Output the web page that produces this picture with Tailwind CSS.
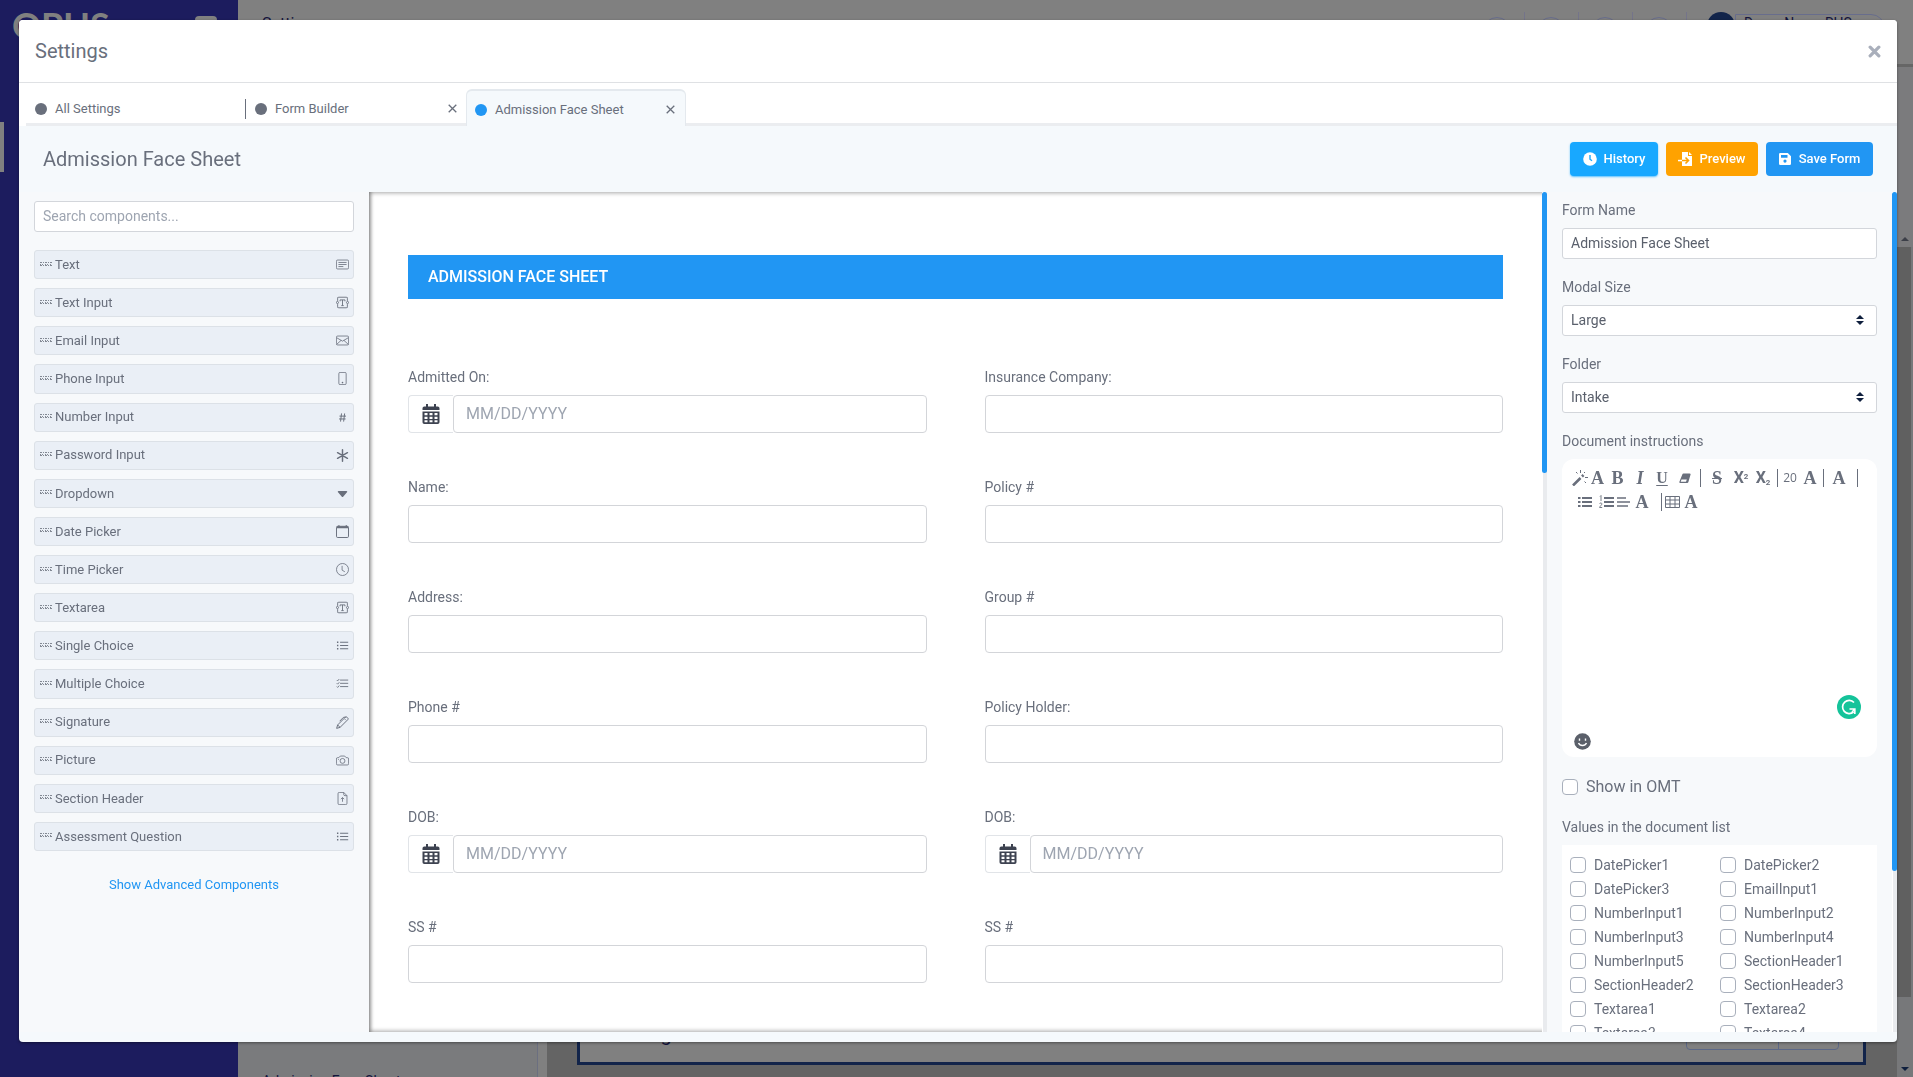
<!DOCTYPE html>
<html lang="en">
<head>
<meta charset="utf-8">
<title>Settings - Admission Face Sheet</title>
<script src="https://cdn.jsdelivr.net/npm/@tailwindcss/browser@4"></script>
</head>
<body class="h-screen overflow-hidden bg-[#808080] font-['Roboto',sans-serif] text-[#696f7c]">

<svg class="hidden" aria-hidden="true">
  <symbol id="grip" viewBox="0 0 12 5"><path fill="currentColor" d="M0 0h2v1H0zM3 0h1v1H3zM5 0h2v1H5zM8 0h1v1H8zM10 0h2v1h-2zM0 2h1v1H0zM2 2h1v1H2zM5 2h1v1H5zM7 2h1v1H7zM10 2h1v1h-1zM0 3h2v1H0zM3 3h1v1H3zM5 3h2v1H5zM8 3h1v1H8zM10 3h2v1h-2z" opacity=".8"/></symbol>
  <symbol id="text" viewBox="0 0 16 16"><g fill="none" stroke="currentColor"><rect x=".5" y="2.5" width="15" height="11" rx="1.5"/><path d="M3 5.5h10M3 8h10M3 10.5h6"/></g></symbol>
  <symbol id="textinput" viewBox="0 0 16 16"><g fill="none" stroke="currentColor" stroke-width="1.1"><path d="M2 6V3.500A1.500 1.500 0 0 1 3.500 1.500h9A1.500 1.500 0 0 1 14 3.500V6M2 10v2.500A1.500 1.500 0 0 0 3.500 14.500h9a1.500 1.500 0 0 0 1.500-2V10"/><circle cx="1.800" cy="8" r="1.300"/><circle cx="14.200" cy="8" r="1.300"/><path d="M5 6.500V4.800h6v1.700M8 4.800v7M6.500 11.800h3"/></g></symbol>
  <symbol id="mail" viewBox="0 0 16 16"><g fill="none" stroke="currentColor"><rect x=".5" y="2.500" width="15" height="11" rx="1.500"/><path d="M.7 4.500 8 8.800l7.300-4.300M.8 12.800l5.500-5M15.200 12.800l-5.500-5"/></g></symbol>
  <symbol id="phone" viewBox="0 0 16 16"><rect x="3.500" y=".5" width="9" height="15" rx="1.500" fill="none" stroke="currentColor"/><circle cx="8" cy="13" r="1" fill="currentColor"/></symbol>
  <symbol id="hash" viewBox="0 0 16 16"><path d="M6.800 3 5.600 13M10.600 3 9.400 13M4.300 6.300h8M3.800 9.800h8" fill="none" stroke="currentColor" stroke-width="1.200"/></symbol>
  <symbol id="asterisk" viewBox="0 0 16 16"><path d="M8 1v14M1.900 4.500l12.200 7M1.900 11.500l12.200-7" fill="none" stroke="currentColor" stroke-width="1.800" stroke-linecap="round"/></symbol>
  <symbol id="caret" viewBox="0 0 16 16"><path d="M3.200 5h9.600a.9.9 0 0 1 .7 1.600l-4.700 5.300a1 1 0 0 1-1.600 0L2.500 6.600A.9.900 0 0 1 3.200 5z" fill="currentColor"/></symbol>
  <symbol id="calendar" viewBox="0 0 16 16"><rect x=".6" y="1.600" width="14.800" height="13.800" rx="1.500" fill="none" stroke="currentColor" stroke-width="1.200"/><path d="M1 1.500h14v2.500H1zM3 0h1.200v2H3zM12 0h1.200v2H12z" fill="currentColor"/></symbol>
  <symbol id="clock" viewBox="0 0 16 16"><g fill="none" stroke="currentColor"><circle cx="8" cy="8" r="7.400"/><path d="M7.500 3.500v5.300l3.400 2"/></g></symbol>
  <symbol id="list" viewBox="0 0 16 16"><path d="M5 4h10M5 8h10M5 12h10" fill="none" stroke="currentColor" stroke-width="1.200"/><path d="M1.200 3.200h1.700v1.700H1.200zM1.200 7.200h1.700v1.700H1.200zM1.200 11.200h1.700v1.700H1.200z" fill="currentColor"/></symbol>
  <symbol id="checks" viewBox="0 0 16 16"><path d="M5 3.800h10M5 7.800h10M5 11.800h10M1 3.800l1 1 2-2.300M1 7.800l1 1 2-2.300M1 11.800l1 1 2-2.300" fill="none" stroke="currentColor" stroke-width="1.100"/></symbol>
  <symbol id="pen" viewBox="0 0 16 16"><path d="M.8 15.200 2 11 11.500 1.500a1.400 1.400 0 0 1 2 0l1 1a1.400 1.400 0 0 1 0 2L5 14zM2 11l3 3M12 1.200 9 1.800 4.500 6.400M11 4l1 1" fill="none" stroke="currentColor" stroke-width="1.200" stroke-linejoin="round"/></symbol>
  <symbol id="camera" viewBox="0 0 16 16"><g fill="none" stroke="currentColor"><path d="M.5 6A1.500 1.500 0 0 1 2 4.500h1.500L5.300 2.500h5.400l1.800 2H14A1.500 1.500 0 0 1 15.500 6v6a1.500 1.500 0 0 1-1.500 1.500H2A1.500 1.500 0 0 1 .5 12z"/><circle cx="8" cy="8.500" r="3"/></g><path d="M2.500 6h1v1h-1z" fill="currentColor"/></symbol>
  <symbol id="filearrow" viewBox="0 0 16 16"><path d="M9.500.5H4A1.500 1.500 0 0 0 2.500 2v12A1.500 1.500 0 0 0 4 15.500h8a1.500 1.500 0 0 0 1.500-1.500V4.500zM9.500.5v2.500A1.500 1.500 0 0 0 11 4.500h2.500M8 12V7M6 8.800l2-2 2 2" fill="none" stroke="currentColor"/></symbol>
  <symbol id="close" viewBox="0 0 9 9"><path d="M.7.7l7.600 7.600M8.300.7L.7 8.300" fill="none" stroke="currentColor" stroke-width="1.300"/></symbol>
  <symbol id="updown" viewBox="0 0 8 10"><path d="M4 0l4 4H0zM4 10L0 6h8z" fill="#0f1f3d"/></symbol>
  <symbol id="caldays" viewBox="0 0 17 20"><path fill="currentColor" fill-rule="evenodd" d="M3.500 0h2v2.500h6V0h2v2.500h1.700A1.800 1.800 0 0 1 17 4.300V6H0V4.300A1.800 1.800 0 0 1 1.800 2.500h1.700zM0 7.500h17v10.700a1.800 1.800 0 0 1-1.800 1.800H1.800A1.800 1.800 0 0 1 0 18.200zM2 9v2.300h3V9zm5 0v2.300h3V9zm5 0v2.300h3V9zM2 12.700V15h3v-2.300zm5 0V15h3v-2.300zm5 0V15h3v-2.300zM2 16.300v2h3v-2zm5 0v2h3v-2zm5 0v2h3v-2z"/></symbol>
</svg>

<!-- Page behind the dialog -->
<div class="flex h-full overflow-hidden" aria-hidden="true">
  <aside class="relative flex h-full w-[238px] shrink-0 items-start justify-between bg-[#1c1c5e] pt-[9px] pr-[21px] pl-3 text-[#808080]">
    <span class="font-['Lato',sans-serif] text-[36px] leading-8 font-bold">OPUS</span>
    <span class="mt-[7px] h-4 w-[22px] rounded-sm bg-[#808080]"></span>
    <span class="absolute top-[122px] left-0 h-[50px] w-1 bg-[#808080]"></span>
  </aside>
  <div class="flex min-w-0 flex-1 flex-col">
    <div class="flex h-16 shrink-0 items-start justify-between bg-[#808080] pr-7 pl-6 text-[#14143c]">
      <span class="pt-3 text-base">Settings</span>
      <div class="flex items-start">
        <div class="mt-3 h-8 w-[54px] border-r border-[#74748a] px-3 pt-[5px]"><div class="size-7 rounded-full border border-[#686d8c]"></div></div>
        <div class="mt-3 h-8 w-[54px] border-r border-[#74748a] px-3 pt-[5px]"><div class="size-7 rounded-full border border-[#686d8c]"></div></div>
        <div class="mt-3 h-8 w-[54px] border-r border-[#74748a] px-3 pt-[5px]"><div class="size-7 rounded-full border border-[#686d8c]"></div></div>
        <div class="mt-3 mr-5 h-8 w-[54px] border-r border-[#74748a] px-3 pt-[5px]"><div class="size-7 rounded-full border border-[#686d8c]"></div></div>
        <div class="mt-3 size-7 rounded-full bg-[#12244a]"></div>
        <div class="mt-[14px] h-7 w-[150px] rounded-r-full border border-[#686d8c] pl-2 text-sm leading-4">Demo Nurse RHS</div>
      </div>
    </div>
    <div class="flex min-h-0 flex-1 border-t-3 border-[#666]">
      <div class="flex w-[300px] shrink-0 flex-col justify-end border-r border-[#6b6f80] bg-[#7a7b7d] pl-6 text-sm text-[#14143c]"><span class="-mb-3.5">Admission Face Sheet</span></div>
      <div class="w-[9px] bg-[#808080]"></div>
      <div class="flex min-w-0 flex-1 bg-[#646464] pr-[31px] pb-[12px] pl-[30px]">
        <div class="flex flex-1 items-end justify-between border-3 border-[#12244a] bg-[#808080] pr-6 pb-3 pl-[29px]">
          <span class="text-xl leading-8 text-[#14143c]">Settings</span>
          <div class="flex h-8 w-[153px] rounded border border-[#5c6887]"><span class="w-[92px] border-r border-[#5c6887]"></span></div>
        </div>
      </div>
      <div class="flex w-4 shrink-0 flex-col items-center bg-[#77787a]">
        <div class="flex h-[180px] w-full shrink-0 flex-col items-center justify-end bg-[#7b7b7d] pb-1.5"><svg class="h-1 w-2" viewBox="0 0 8 4"><path d="M0 4h8L4 0z" fill="#3c3f48"/></svg></div>
        <div class="w-full flex-1 border-r-2 border-[#77787a] bg-[#606060]"></div>
        <div class="flex h-20 items-end pb-1.5"><svg class="h-1 w-2" viewBox="0 0 8 4"><path d="M0 0h8L4 4z" fill="#0f1f3d"/></svg></div>
      </div>
    </div>
  </div>
</div>

<!-- Dialog -->
<div class="fixed inset-0 flex pt-5 pr-4 pb-[35px] pl-[19px]">
<div role="dialog" aria-label="Settings" class="flex min-w-0 flex-1 flex-col overflow-hidden rounded bg-[#f5f9fc] shadow-[0_1px_3px_rgba(0,0,0,0.4)]">

  <header class="flex h-[63px] shrink-0 items-center justify-between border-b border-[#dfe1e4] bg-white pr-4 pl-4">
    <h1 class="text-xl">Settings</h1>
    <button aria-label="Close" class="text-[#a9afbb]"><svg class="size-[13px]" viewBox="0 0 12 12"><path d="M2 2l8 8M10 2l-8 8" stroke="currentColor" stroke-width="3" stroke-linecap="round"/></svg></button>
  </header>

  <nav class="flex h-[43px] shrink-0 items-end bg-white pl-[7px] text-[13px]">
    <div class="flex h-9 w-[220px] items-center border-b-3 border-[#ebedf0] pt-1 pr-[10px] pl-[9px]">
      <a href="#" class="flex flex-1 items-center gap-2"><span class="size-3 rounded-full bg-[#696f7c]"></span>All Settings</a>
      <span class="-mr-[10px] h-5 w-px bg-[#696f7c]"></span>
    </div>
    <div class="flex h-9 w-[220px] items-center border-b-3 border-[#ebedf0] pt-1 pr-[9px] pl-[9px]">
      <a href="#" class="flex flex-1 items-center gap-2"><span class="size-3 rounded-full bg-[#696f7c]"></span>Form Builder</a>
      <button aria-label="Close Form Builder"><svg class="size-[9px]"><use href="#close"/></svg></button>
    </div>
    <div class="flex h-[37px] w-[220px] items-center rounded-t-md border-x border-t-2 border-[#e4e9ee] bg-[#f5f9fc] pt-0.5 pr-[10px] pl-2">
      <a href="#" class="flex flex-1 items-center gap-2"><span class="size-3 rounded-full bg-[#2196f3]"></span>Admission Face Sheet</a>
      <button aria-label="Close Admission Face Sheet"><svg class="size-[9px]"><use href="#close"/></svg></button>
    </div>
    <div class="h-9 flex-1 border-b-3 border-[#ebedf0]"></div>
  </nav>

  <div class="flex h-[66px] shrink-0 items-center justify-between pr-6 pl-6">
    <h2 class="text-xl">Admission Face Sheet</h2>
    <div class="flex gap-2 text-[13px] font-medium text-white">
      <button class="flex h-[34px] w-[88px] items-center justify-center gap-[7px] rounded bg-[#18a8ff] shadow-[0_1px_2px_rgba(24,168,255,0.7)]"><svg class="size-[14px]" viewBox="0 0 14 14"><circle cx="7" cy="7" r="6.800" fill="#fff"/><path d="M7 3v4.200l2 1.500" stroke="#18a8ff" stroke-width="1.400" fill="none"/></svg>History</button>
      <button class="flex h-[34px] w-[92px] items-center justify-center gap-[7px] rounded bg-[#ffa200]"><svg class="size-[14px]" viewBox="0 0 14 14"><path d="M4 0h6v4h4v9.500a.5.500 0 0 1-.5.500h-9a.5.500 0 0 1-.5-.5z" fill="#fff"/><path d="M11 0v3h3z" fill="#fff"/><path d="M4 8.500h6M7.500 5.500l3 3-3 3" stroke="#ffa200" stroke-width="1.600" fill="none"/><path d="M0 7.800h4v1.500H0z" fill="#fff"/></svg>Preview</button>
      <button class="flex h-[34px] w-[107px] items-center justify-center gap-2 rounded bg-[#2196f3]"><svg class="size-3" viewBox="0 0 12 12"><path fill="#fff" fill-rule="evenodd" d="M1.300 0h7.500L12 3.200v7.500a1.300 1.300 0 0 1-1.300 1.300H1.300A1.300 1.300 0 0 1 0 10.700V1.300A1.300 1.300 0 0 1 1.300 0zM2 2v2.800h6.500V2zm4 4.500A1.600 1.600 0 1 0 6 9.700a1.600 1.600 0 1 0 0-3.200z"/></svg>Save Form</button>
    </div>
  </div>

  <div class="mb-[10px] flex min-h-0 flex-1">
    <!-- Component palette -->
    <section class="flex w-[350px] shrink-0 flex-col bg-[#f7f9fb] pt-[9px] pr-[15px] pl-[15px]">
      <input type="search" aria-label="Search components" placeholder="Search components..." class="h-[31px] shrink-0 rounded-[3px] border border-[#d3d6db] bg-white px-2 pb-0.5 text-sm placeholder:text-[#9ea5b1]">
      <ul id="palette" class="mt-[18px] grid h-[601px] shrink-0 auto-rows-fr gap-[9px] text-[13px]"></ul>
      <a href="#" class="mt-6 self-center text-[13px] text-[#2196f3]">Show Advanced Components</a>
    </section>

    <!-- Form canvas -->
    <section class="min-w-0 flex-1 overflow-hidden bg-white px-[39px] pt-[63px] shadow-[inset_3px_3px_4px_-2px_rgba(0,0,0,0.35),inset_3px_-3px_4px_-2px_rgba(0,0,0,0.35)]">
      <h3 class="flex h-11 items-center bg-[#2196f3] px-5 text-base font-medium text-white">ADMISSION FACE SHEET</h3>
      <form id="fields" class="mt-[68px] grid grid-cols-2 gap-x-[58px]"></form>
    </section>
    <div class="w-[5px] shrink-0 border-l border-white bg-[#e9ebee]"><div class="-ml-px h-[281px] w-[5px] rounded-full bg-[#2196f3]"></div></div>

    <!-- Form properties -->
    <section class="flex w-[345px] shrink-0 flex-col overflow-hidden bg-[#f7f9fb] pt-2 pr-[15px] pl-[15px] text-sm">
      <label for="form-name" class="leading-5">Form Name</label>
      <input id="form-name" value="Admission Face Sheet" class="mt-2 h-[31px] shrink-0 rounded-[3px] border border-[#d3d6db] bg-white px-2 pb-0.5 text-[#5a606c]">
      <label for="modal-size" class="mt-[18px] leading-5">Modal Size</label>
      <div class="relative mt-2 flex h-[31px] shrink-0">
        <select id="modal-size" class="w-full appearance-none rounded-[3px] border border-[#d3d6db] bg-white px-2 pb-0.5 text-[#5a606c]"><option>Large</option></select>
        <svg class="pointer-events-none absolute top-[10px] right-[13px] h-[10px] w-2"><use href="#updown"/></svg>
      </div>
      <label for="folder" class="mt-[18px] leading-5">Folder</label>
      <div class="relative mt-2 flex h-[31px] shrink-0">
        <select id="folder" class="w-full appearance-none rounded-[3px] border border-[#d3d6db] bg-white px-2 pb-0.5 text-[#5a606c]"><option>Intake</option></select>
        <svg class="pointer-events-none absolute top-[10px] right-[13px] h-[10px] w-2"><use href="#updown"/></svg>
      </div>
      <span class="mt-[18px] leading-5">Document instructions</span>
      <div class="relative mt-2 flex h-[298px] shrink-0 flex-col rounded-xl bg-white pt-[7px] pl-[10px]">
        <div class="flex h-6 items-center font-['Liberation_Serif',serif] text-lg leading-6 font-bold">
          <button aria-label="Magic wand" class="w-[18px]"><svg class="size-4" viewBox="0 0 16 16"><path d="M1 15.500 8.500 8M10 6.500 11.500 5" stroke="currentColor" stroke-width="2.600" fill="none"/><path d="M8.500 0v3M4 2l1.500 1.500M13 2l-1 1M13 7.500h3M12.500 11.500l1.500 1.500" stroke="currentColor" fill="none"/></svg></button>
          <button class="w-[15px]">A</button>
          <button aria-label="Bold" class="w-[25px]">B</button>
          <button aria-label="Italic" class="w-5 italic">I</button>
          <button aria-label="Underline" class="w-6 text-base underline underline-offset-2">U</button>
          <button aria-label="Eraser" class="flex w-[22px] justify-center"><svg class="h-[11px] w-3" viewBox="0 0 12 11"><path d="M4.500.5h6a1 1 0 0 1 1 1.300L9.300 9.200a1.200 1.200 0 0 1-1.100.8H1.400a1 1 0 0 1-1-1.300L3.300 1.400A1.300 1.300 0 0 1 4.500.5z" fill="currentColor"/><path d="M2.500 6.500h5.300L7 8.800H1.700z" fill="#fff"/></svg></button>
          <span class="mx-1 h-[18px] w-px bg-[#696f7c]"></span>
          <button aria-label="Strikethrough" class="w-6 line-through">S</button>
          <button class="w-6 font-['Roboto',sans-serif] text-base">X<sup class="text-[8px]">2</sup></button>
          <button class="w-5 font-['Roboto',sans-serif] text-base">X<sub class="text-[8px]">2</sub></button>
          <span class="mx-1 h-[18px] w-px bg-[#696f7c]"></span>
          <button class="w-4 font-['Open_Sans',sans-serif] text-xs font-normal">20</button>
          <button class="w-6">A</button>
          <span class="mx-px h-[18px] w-px bg-[#696f7c]"></span>
          <button class="w-7">A</button>
          <span class="mx-1 h-[18px] w-px bg-[#696f7c]"></span>
        </div>
        <div class="flex h-6 items-center pl-[6px] font-['Liberation_Serif',serif] text-lg leading-6 font-bold">
          <button aria-label="Bulleted list" class="w-5"><svg class="h-3 w-[14px]" viewBox="0 0 14 12"><path d="M4 2h10M4 6h10M4 10h10M0 2h2.500M0 6h2.500M0 10h2.500" stroke="currentColor" stroke-width="2"/></svg></button>
          <button aria-label="Numbered list" class="ml-px w-[18px]"><svg class="h-[14px] w-[15px]" viewBox="0 0 15 14"><path d="M5 3h10M5 7h10M5 11h10" stroke="currentColor" stroke-width="2"/><path d="M1 1.500l1-1V6M.6 9c.3-1.500 2.600-1.300 2.200.2-.2 1-1.800 1.800-2.200 3.300H3.200" stroke="currentColor" stroke-width=".9" fill="none"/></svg></button>
          <button aria-label="Align left" class="w-4"><svg class="h-3 w-[13px]" viewBox="0 0 13 12"><path d="M0 2h9M0 6h13M0 10h11" stroke="currentColor" stroke-width="1.500"/></svg></button>
          <button class="w-[18px]">A</button>
          <span class="ml-[10px] h-[18px] w-px bg-[#696f7c]"></span>
          <button aria-label="Table" class="ml-[3px] w-[18px]"><svg class="h-3 w-[15px]" viewBox="0 0 15 12"><path d="M.5.5h14v11H.5zM.5 4h14M.5 8h14M5 .5v11M10 .5v11" stroke="currentColor" fill="none"/></svg></button>
          <button class="w-4">A</button>
        </div>
        <div contenteditable="true" role="textbox" aria-label="Document instructions" class="flex-1 outline-none"></div>
        <svg class="mb-[7px] ml-0.5 size-[17px]" viewBox="0 0 17 17"><circle cx="8.500" cy="8.500" r="8.300" fill="#5b606a"/><path d="M4.500 10c1.500 3.300 6.500 3.300 8 0M5.500 5.500v2.200M11.500 5.500v2.200" stroke="#fff" stroke-width="1.400" fill="none"/></svg>
        <svg class="absolute right-4 bottom-[38px] size-6" viewBox="0 0 24 24"><circle cx="12" cy="12" r="12" fill="#15c39a"/><path d="M17 7.500A6.600 6.600 0 1 0 16.500 17M12.500 14h5.300v5M18 14l-3 3" stroke="#fff" stroke-width="1.700" fill="none"/></svg>
      </div>
      <label class="mt-[18px] flex items-center gap-2 text-base"><input type="checkbox" class="size-4 appearance-none rounded-[4px] border border-[#a9b0bc] bg-white">Show in OMT</label>
      <span class="mt-[18px] leading-5">Values in the document list</span>
      <div id="values" class="mt-2 grid shrink-0 auto-rows-[24px] grid-cols-[150px_1fr] bg-white pt-2 pl-2"></div>
    </section>
    <div class="w-[5px] shrink-0 border-l border-white bg-[#e9ebee]"><div class="-ml-px h-[679px] w-[5px] rounded-full bg-[#2196f3]"></div></div>
  </div>
</div>
</div>

<script>
const components = [['Text','text'],['Text Input','textinput'],['Email Input','mail'],['Phone Input','phone'],['Number Input','hash'],['Password Input','asterisk'],['Dropdown','caret'],['Date Picker','calendar'],['Time Picker','clock'],['Textarea','textinput'],['Single Choice','list'],['Multiple Choice','checks'],['Signature','pen'],['Picture','camera'],['Section Header','filearrow'],['Assessment Question','list']];
document.getElementById('palette').innerHTML = components.map(([name, icon]) => `
  <li class="flex items-center rounded-[3px] border border-[#dce1e7] bg-[#eaeff6] pr-1 pl-[5px]">
    <svg class="mb-px h-[5px] w-3"><use href="#grip"/></svg><span class="ml-[3px] flex-1">${name}</span><svg class="size-[13px]"><use href="#${icon}"/></svg>
  </li>`).join('');

const fields = [['Admitted On:',1],['Insurance Company:',0],['Name:',0],['Policy #',0],['Address:',0],['Group #',0],['Phone #',0],['Policy Holder:',0],['DOB:',1],['DOB:',1],['SS #',0],['SS #',0]];
document.getElementById('fields').innerHTML = fields.map(([label, date], i) => `
  <div class="h-[110px]">
    <label for="f${i}" class="block text-sm leading-5">${label}</label>
    <div class="mt-2 flex h-[38px]">
      ${date ? '<span class="flex w-[45px] shrink-0 items-center justify-center rounded-l border border-r-0 border-[#e1e4e8] text-[#3d4250]"><svg class="h-5 w-[18px]"><use href="#caldays"/></svg></span>' : ''}
      <input id="f${i}" placeholder="${date ? 'MM/DD/YYYY' : ''}" class="min-w-0 flex-1 rounded border border-[#d3d5d9] bg-white px-3 text-base placeholder:text-[#9ea5b1]">
    </div>
  </div>`).join('');

const values = ['DatePicker1','DatePicker2','DatePicker3','EmailInput1','NumberInput1','NumberInput2','NumberInput3','NumberInput4','NumberInput5','SectionHeader1','SectionHeader2','SectionHeader3','Textarea1','Textarea2','Textarea3','Textarea4'];
document.getElementById('values').innerHTML = values.map(v => `
  <label class="flex items-center gap-2"><input type="checkbox" class="size-4 appearance-none rounded-[4px] border border-[#a9b0bc] bg-white">${v}</label>`).join('');
</script>
</body>
</html>
